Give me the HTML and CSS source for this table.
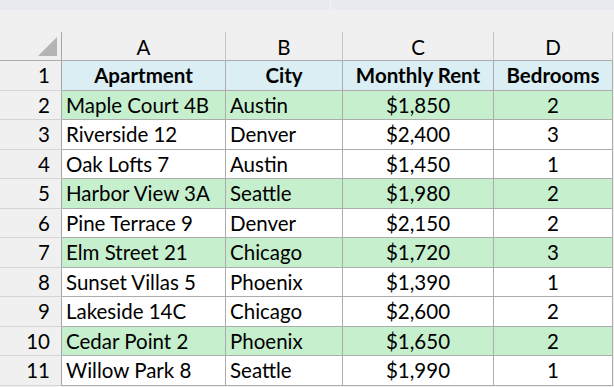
FILE: index.html
```html
<!DOCTYPE html>
<html>
<head>
<meta charset="utf-8">
<link rel="stylesheet" href="styles.css">
</head>
<body>
<div class="topbar"><div class="tb-left"></div><div class="tb-right"></div></div>
<div class="spacer"></div>
<div class="sheet">
  <div class="corner"><div class="tri"></div></div>
  <div class="colhdr">A</div>
  <div class="colhdr">B</div>
  <div class="colhdr">C</div>
  <div class="colhdr">D</div>

  <div class="rowhdr">1</div>
  <div class="cell head">Apartment</div>
  <div class="cell head">City</div>
  <div class="cell head">Monthly Rent</div>
  <div class="cell head">Bedrooms</div>

  <div class="rowhdr">2</div>
  <div class="cell g left">Maple Court 4B</div>
  <div class="cell g left">Austin</div>
  <div class="cell g">$1,850</div>
  <div class="cell g">2</div>

  <div class="rowhdr">3</div>
  <div class="cell left">Riverside 12</div>
  <div class="cell left">Denver</div>
  <div class="cell">$2,400</div>
  <div class="cell">3</div>

  <div class="rowhdr">4</div>
  <div class="cell left">Oak Lofts 7</div>
  <div class="cell left">Austin</div>
  <div class="cell">$1,450</div>
  <div class="cell">1</div>

  <div class="rowhdr">5</div>
  <div class="cell g left">Harbor View 3A</div>
  <div class="cell g left">Seattle</div>
  <div class="cell g">$1,980</div>
  <div class="cell g">2</div>

  <div class="rowhdr">6</div>
  <div class="cell left">Pine Terrace 9</div>
  <div class="cell left">Denver</div>
  <div class="cell">$2,150</div>
  <div class="cell">2</div>

  <div class="rowhdr">7</div>
  <div class="cell g left">Elm Street 21</div>
  <div class="cell g left">Chicago</div>
  <div class="cell g">$1,720</div>
  <div class="cell g">3</div>

  <div class="rowhdr">8</div>
  <div class="cell left">Sunset Villas 5</div>
  <div class="cell left">Phoenix</div>
  <div class="cell">$1,390</div>
  <div class="cell">1</div>

  <div class="rowhdr">9</div>
  <div class="cell left">Lakeside 14C</div>
  <div class="cell left">Chicago</div>
  <div class="cell">$2,600</div>
  <div class="cell">2</div>

  <div class="rowhdr">10</div>
  <div class="cell g left">Cedar Point 2</div>
  <div class="cell g left">Phoenix</div>
  <div class="cell g">$1,650</div>
  <div class="cell g">2</div>

  <div class="rowhdr">11</div>
  <div class="cell left">Willow Park 8</div>
  <div class="cell left">Seattle</div>
  <div class="cell">$1,990</div>
  <div class="cell">1</div>
</div>
</body>
</html>
```
FILE: styles.css
```css
html, body {
  margin: 0;
  padding: 0;
  background: #f0f0f0;
  font-family: "Lato", "Open Sans", sans-serif;
  font-size: 20.5px;
  color: #000;
  overflow: hidden;
}
.topbar {
  height: 10px;
  display: flex;
  background: #e7ebef;
}
.tb-left {
  width: 330px;
  border-right: 1px solid #f4f6f4;
}
.tb-right { flex: 1; }
.spacer { height: 22px; }
.sheet {
  display: grid;
  grid-template-columns: 62px 164px 117px 151px 119px;
  grid-template-rows: 29px repeat(11, 29.5px);
}
.corner {
  border-right: 1px solid #a6a6a6;
  border-bottom: 1px solid #acacac;
  position: relative;
}
.tri {
  position: absolute;
  right: 4px;
  bottom: 4px;
  width: 0;
  height: 0;
  border-left: 19px solid transparent;
  border-bottom: 19px solid #b4b4b4;
}
.colhdr {
  display: flex;
  align-items: center;
  justify-content: center;
  border-right: 1px solid #c4c4c4;
  border-bottom: 1px solid #acacac;
  padding-top: 1px;
}
.rowhdr {
  display: flex;
  align-items: center;
  justify-content: flex-end;
  padding-right: 11px;
  border-right: 1px solid #a6a6a6;
  border-bottom: 1px solid #d4d4d4;
}
.cell {
  display: flex;
  align-items: center;
  justify-content: center;
  background: #fff;
  border-right: 1px solid #acacac;
  border-bottom: 1px solid #acacac;
  white-space: nowrap;
  overflow: hidden;
}
.cell.left {
  justify-content: flex-start;
  padding-left: 4px;
}
.cell.head {
  background: #daeef3;
  font-weight: 700;
}
.cell.g {
  background: #c6efce;
}
```
